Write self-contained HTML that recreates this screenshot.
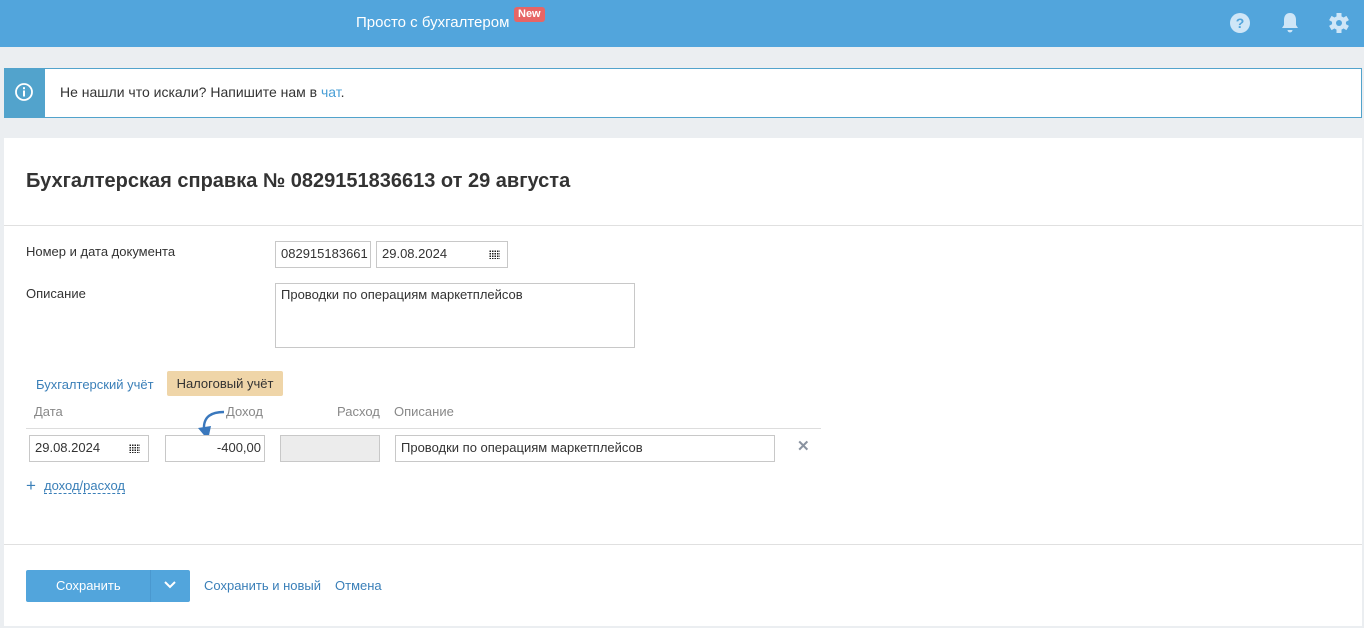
<!DOCTYPE html>
<html><head><meta charset="utf-8"><style>
*{box-sizing:border-box;margin:0;padding:0}
body{width:1364px;height:628px;background:#ebeef1;font-family:"Liberation Sans",Arial,sans-serif;position:relative;overflow:hidden;color:#333}
.a{position:absolute}
.hdr{left:0;top:0;width:1364px;height:47px;background:#52a5dc}
.inp{position:absolute;border:1px solid #c8c8c8;background:#fff;font-size:13px;color:#333;padding-left:5px;line-height:24px;height:27px}
.lnk{color:#3a7fb8}
.dots{position:absolute;width:11px;height:9px;background:
radial-gradient(circle,#222 0.9px,transparent 1px) 0 0/2.5px 2.5px}
</style></head><body>
<div class="a hdr"></div>
<div class="a" style="left:356px;top:14px;color:#fff;font-size:15px">Просто с бухгалтером</div>
<div class="a" style="left:514px;top:7px;background:#e76565;color:#fff;font-size:11px;font-weight:bold;padding:1px 4px;border-radius:3px;line-height:13px">New</div>
<svg class="a" style="left:1229px;top:12px" width="22" height="22" viewBox="0 0 22 22"><circle cx="11" cy="11" r="10" fill="#cfe6f7"/><text x="11" y="16" text-anchor="middle" font-family="Liberation Sans" font-weight="bold" font-size="14" fill="#52a5dc">?</text></svg>
<svg class="a" style="left:1280px;top:12px" width="20" height="22" viewBox="0 0 20 22"><path d="M10 1c-4 0-6 3-6 7v5l-2 3h16l-2-3V8c0-4-2-7-6-7z" fill="#cfe6f7"/><path d="M7.5 18a2.5 2.5 0 0 0 5 0z" fill="#cfe6f7"/></svg>
<svg class="a" style="left:1328px;top:12px" width="22" height="22" viewBox="0 0 22 22"><g fill="#cfe6f7" transform="translate(11 11)"><circle r="7"/><rect x="-2.5" y="-10" width="5" height="20"/><rect x="-2.5" y="-10" width="5" height="20" transform="rotate(60)"/><rect x="-2.5" y="-10" width="5" height="20" transform="rotate(120)"/></g><circle cx="11" cy="11" r="3" fill="#52a5dc"/></svg>

<div class="a" style="left:4px;top:68px;width:1358px;height:50px;background:#fff;border:1px solid #52a3cc"></div>
<div class="a" style="left:4px;top:68px;width:41px;height:50px;background:#52a3cc"></div>
<svg class="a" style="left:14px;top:82px" width="20" height="20" viewBox="0 0 20 20"><circle cx="10" cy="10" r="8" fill="none" stroke="#fff" stroke-width="1.8"/><rect x="9" y="8.5" width="2" height="6" fill="#fff"/><rect x="9" y="5.2" width="2" height="2" fill="#fff"/></svg>
<div class="a" style="left:60px;top:84px;font-size:14px;color:#333">Не нашли что искали? Напишите нам в <span style="color:#4a9fd6">чат</span>.</div>

<div class="a" style="left:4px;top:138px;width:1358px;height:488px;background:#fff"></div>
<div class="a" style="left:26px;top:170px;font-size:20px;font-weight:bold;color:#333">Бухгалтерская справка № 0829151836613 от 29 августа</div>
<div class="a" style="left:4px;top:225px;width:1358px;height:1px;background:#e0e0e0"></div>

<div class="a" style="left:26px;top:244px;font-size:13px">Номер и дата документа</div>
<div class="inp" style="left:275px;top:241px;width:96px;overflow:hidden">082915183661</div>
<div class="inp" style="left:376px;top:241px;width:132px">29.08.2024</div>
<div class="dots" style="left:489px;top:250px"></div>
<div class="a" style="left:26px;top:286px;font-size:13px">Описание</div>
<div class="inp" style="left:275px;top:283px;width:360px;height:65px;line-height:22px">Проводки по операциям маркетплейсов</div>

<div class="a lnk" style="left:36px;top:377px;font-size:13px">Бухгалтерский учёт</div>
<div class="a" style="left:167px;top:371px;width:116px;height:25px;background:#efd5a8;border-radius:2px;font-size:13px;line-height:25px;text-align:center;color:#333">Налоговый учёт</div>
<div class="a" style="left:34px;top:404px;font-size:13px;color:#888">Дата</div>
<div class="a" style="left:226px;top:404px;font-size:13px;color:#888">Доход</div>
<div class="a" style="left:337px;top:404px;font-size:13px;color:#888">Расход</div>
<div class="a" style="left:394px;top:404px;font-size:13px;color:#888">Описание</div>
<div class="a" style="left:26px;top:428px;width:795px;height:1px;background:#ddd"></div>
<svg class="a" style="left:194px;top:408px" width="32" height="34" viewBox="0 0 32 34"><path d="M30 4C18 4 9 8 10 22" fill="none" stroke="#3a78bd" stroke-width="2.4"/><path d="M4 20l10 12 3-14z" fill="#3a78bd"/></svg>
<div class="inp" style="left:29px;top:435px;width:120px">29.08.2024</div>
<div class="dots" style="left:129px;top:444px"></div>
<div class="inp" style="left:165px;top:435px;width:100px;text-align:right;padding-right:3px">-400,00</div>
<div class="inp" style="left:280px;top:435px;width:100px;background:#ececec"></div>
<div class="inp" style="left:395px;top:435px;width:380px">Проводки по операциям маркетплейсов</div>
<div class="a" style="left:797px;top:437px;font-size:15px;font-weight:bold;color:#8a93a0">✕</div>
<div class="a lnk" style="left:26px;top:477px;font-size:17px;line-height:17px">+</div>
<div class="a lnk" style="left:44px;top:479px;font-size:13px;border-bottom:1px dashed #3a7fb8;line-height:14px">доход/расход</div>

<div class="a" style="left:4px;top:544px;width:1358px;height:1px;background:#e0e0e0"></div>
<div class="a" style="left:26px;top:570px;width:164px;height:32px;background:#52a5dc;border-radius:2px"></div>
<div class="a" style="left:150px;top:570px;width:1px;height:32px;background:#4a98cf"></div>
<div class="a" style="left:56px;top:578px;color:#fff;font-size:13px">Сохранить</div>
<svg class="a" style="left:164px;top:580px" width="12" height="10" viewBox="0 0 12 10"><path d="M1 2l5 5 5-5" fill="none" stroke="#fff" stroke-width="2"/></svg>
<div class="a lnk" style="left:204px;top:578px;font-size:13px">Сохранить и новый</div>
<div class="a lnk" style="left:335px;top:578px;font-size:13px">Отмена</div>
</body></html>
